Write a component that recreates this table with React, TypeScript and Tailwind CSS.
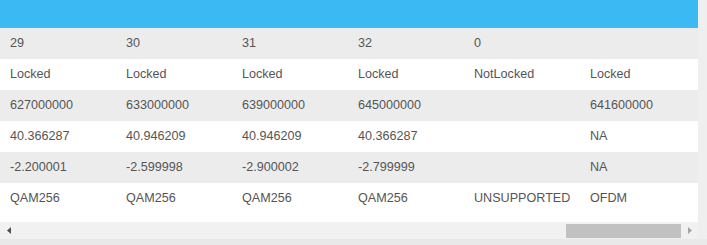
import React from 'react';

const rows: string[][] = [
  ['29', '30', '31', '32', '0', ''],
  ['Locked', 'Locked', 'Locked', 'Locked', 'NotLocked', 'Locked'],
  ['627000000', '633000000', '639000000', '645000000', '', '641600000'],
  ['40.366287', '40.946209', '40.946209', '40.366287', '', 'NA'],
  ['-2.200001', '-2.599998', '-2.900002', '-2.799999', '', 'NA'],
  ['QAM256', 'QAM256', 'QAM256', 'QAM256', 'UNSUPPORTED', 'OFDM'],
];

export default function App() {
  return (
    <div
      className="w-[707px] h-[245px] bg-[#e9e9e9] flex overflow-hidden"
      style={{ fontFamily: '"Liberation Sans", Arial, sans-serif' }}
    >
      <div className="w-[698px] flex flex-col">
        <div className="h-[28px] bg-[#3bb9f2]" />
        <div className="bg-white pb-2 overflow-hidden">
          {rows.map((row, i) => (
            <div
              key={i}
              className={`flex h-[31px] items-center ${i % 2 === 0 ? 'bg-[#ececec]' : 'bg-white'}`}
            >
              {row.map((cell, j) => (
                <div key={j} className="w-[116px] shrink-0 pl-[10px] text-[12.6px] text-[#555] whitespace-nowrap">
                  {cell}
                </div>
              ))}
            </div>
          ))}
        </div>
        {/* horizontal scrollbar, scrolled to the far right */}
        <div className="h-[17px] bg-[#f1f1f1] flex items-center">
          <div className="w-[17px] h-full flex items-center justify-center">
            <svg width="4" height="7" viewBox="0 0 4 7">
              <path d="M4 0 L0 3.5 L4 7 Z" fill="#505050" />
            </svg>
          </div>
          <div className="flex-1 h-full flex items-center justify-end">
            <div className="w-[115px] h-[14px] bg-[#c1c1c1]" />
          </div>
          <div className="w-[17px] h-full flex items-center justify-center">
            <svg width="4" height="7" viewBox="0 0 4 7">
              <path d="M0 0 L4 3.5 L0 7 Z" fill="#a3a3a3" />
            </svg>
          </div>
        </div>
      </div>
      <div className="flex-1 h-[239px] bg-[#efefef]" />
    </div>
  );
}
